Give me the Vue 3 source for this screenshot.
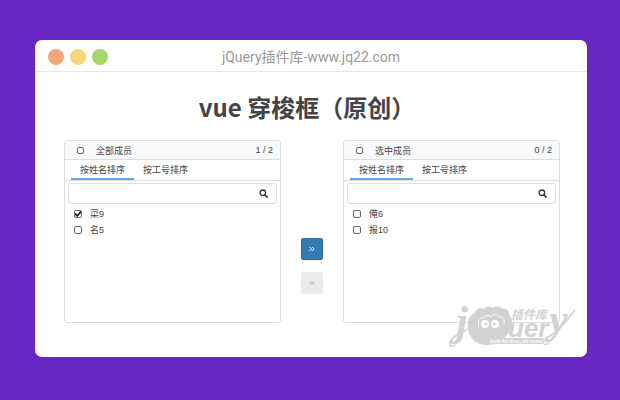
<script setup>
import { computed, reactive } from 'vue'

const panels = reactive([
  {
    id: 'all',
    title: '全部成员',
    sort: 'name',
    query: '',
    items: [
      { name: '菜9', checked: true },
      { name: '名5', checked: false },
    ],
  },
  {
    id: 'selected',
    title: '选中成员',
    sort: 'name',
    query: '',
    items: [
      { name: '俺6', checked: false },
      { name: '报10', checked: false },
    ],
  },
])

const tabs = [
  { key: 'name', label: '按姓名排序' },
  { key: 'number', label: '按工号排序' },
]

const counts = computed(() => panels.map((p) => p.items.filter((i) => i.checked).length))

function allChecked(panel) {
  return panel.items.length > 0 && panel.items.every((i) => i.checked)
}

function toggleAll(panel, event) {
  panel.items.forEach((i) => { i.checked = event.target.checked })
}

function visibleItems(panel) {
  return panel.items.filter((i) => i.name.includes(panel.query))
}

function move(from, to) {
  const moving = panels[from].items.filter((i) => i.checked)
  panels[from].items = panels[from].items.filter((i) => !i.checked)
  panels[to].items.push(...moving.map((i) => ({ ...i, checked: false })))
}
</script>

<template>
  <div class="page">
    <main class="window">
      <header class="titlebar">
        <div class="dots">
          <span class="dot dot-red" />
          <span class="dot dot-yellow" />
          <span class="dot dot-green" />
        </div>
        <span class="address">jQuery插件库-www.jq22.com</span>
      </header>

      <h1>vue 穿梭框（原创）</h1>

      <div class="transfer">
        <section v-for="(panel, index) in panels" :key="panel.id" class="panel" :class="'panel-' + panel.id">
          <div class="panel-head">
            <label class="check">
              <input type="checkbox" :checked="allChecked(panel)" @change="toggleAll(panel, $event)" />
              <span>{{ panel.title }}</span>
            </label>
            <span>{{ counts[index] }} / {{ panel.items.length }}</span>
          </div>
          <div class="tabs">
            <button
              v-for="tab in tabs"
              :key="tab.key"
              type="button"
              class="tab"
              :class="{ active: panel.sort === tab.key }"
              @click="panel.sort = tab.key"
            >{{ tab.label }}</button>
          </div>
          <div class="search">
            <input v-model="panel.query" type="text" aria-label="搜索" />
            <svg width="9" height="9" viewBox="0 0 9 9" fill="none" stroke="#333">
              <circle cx="3.8" cy="3.8" r="2.8" stroke-width="1.3" />
              <path d="M6 6L8.1 8.1" stroke-width="1.6" stroke-linecap="round" />
            </svg>
          </div>
          <ul class="list">
            <li v-for="item in visibleItems(panel)" :key="item.name">
              <label class="check">
                <input v-model="item.checked" type="checkbox" />
                <span>{{ item.name }}</span>
              </label>
            </li>
          </ul>
        </section>

        <div class="actions">
          <button type="button" class="move primary" aria-label="右移" @click="move(0, 1)">
            <svg width="6" height="6" viewBox="0 0 6 6" fill="none" stroke="currentColor">
              <path d="M.6 1L2.6 3L.6 5M3.2 1L5.2 3L3.2 5" />
            </svg>
          </button>
          <button type="button" class="move" aria-label="左移" :disabled="counts[1] === 0" @click="move(1, 0)">
            <svg width="6" height="6" viewBox="0 0 6 6" fill="none" stroke="currentColor">
              <path d="M2.8 1L.8 3L2.8 5M5.4 1L3.4 3L5.4 5" />
            </svg>
          </button>
        </div>
      </div>

      <svg class="watermark" width="130" height="44" viewBox="0 0 130 44" fill="#d2d2d2">
        <text x="8" y="29" class="mark-script">j</text>
        <text x="101" y="27" class="mark-script">y</text>
        <!-- flourishes at both ends of the name -->
        <g fill="none" stroke="#d2d2d2" stroke-width="1.5" stroke-linecap="round">
          <path d="M7 39C1 42 0 37 4 33C8 28 17 26 23 21" />
          <path d="M101 37C95 41 93 36 99 32C109 26 117 18 127 4" />
        </g>
        <!-- sheep's head: wool, face, eyes -->
        <path d="M20 20C19 14 22 9 27 7C27 3 33 1 36 3C38 0 43 0 45 2C48 -1 53 1 54 3C59 2 62 6 61 9C65 12 64 17 63 20C62 28 55 34 49 38L39 39C27 39 20 31 20 20Z" />
        <path d="M31 21C29 16 31 12 35 12C37 9 41 9 43 11C46 7 50 8 51 11C55 10 57 14 56 18" fill="none" stroke="#fff" />
        <circle cx="37" cy="18" r="4" fill="#fff" />
        <circle cx="47" cy="18" r="4" fill="#fff" />
        <circle cx="38" cy="18" r="1.5" />
        <circle cx="46" cy="18" r="1.5" />
        <path d="M41 32H96L94 38H39Z" />
        <text x="60" y="31" class="mark-name">uer</text>
        <text x="63" y="13" class="mark-zh">插件库</text>
        <text x="42" y="37" class="mark-line">look for less, do more</text>
      </svg>
    </main>
  </div>
</template>

<style>
body {
  background: #6826c2;
}
</style>

<style scoped>
.page {
  box-sizing: border-box;
  min-height: 100vh;
  padding: 40px 33px 43px 35px;
  background: #6826c2;
  color: #444;
  font-family: "Liberation Sans", "Noto Sans CJK SC", sans-serif;
  font-size: 9px;
}
.window {
  position: relative;
  padding-bottom: 34px;
  border-radius: 7px;
  background: #fff;
}
.titlebar {
  display: grid;
  grid-template-columns: 1fr auto 1fr;
  align-items: center;
  height: 31px;
  padding: 0 13px;
  border-bottom: 1px solid #e6e6e6;
}
.dots {
  display: flex;
  gap: 6px;
  padding-top: 2px;
}
.dot {
  width: 16px;
  height: 16px;
  border-radius: 50%;
}
.dot-red { background: #f5a67b; }
.dot-yellow { background: #f8d77c; }
.dot-green { background: #a4d86a; }
.address {
  color: #999;
  font-family: Roboto, "Noto Sans CJK SC", sans-serif;
  font-size: 14px;
}
h1 {
  margin: 17px 0 15px;
  padding-right: 8px;
  color: #444;
  font-family: "Noto Sans CJK SC", sans-serif;
  font-size: 24px;
  font-weight: 700;
  line-height: 36px;
  text-align: center;
}
.transfer {
  display: grid;
  grid-template-columns: 1fr 62px 1fr;
  padding: 0 27px 0 29px;
}
.panel {
  box-sizing: border-box;
  min-width: 0;
  min-height: 183px;
  border: 1px solid #ddd;
  border-radius: 3px;
}
.panel-all { grid-area: 1 / 1; }
.panel-selected { grid-area: 1 / 3; }
.panel-head {
  display: flex;
  align-items: center;
  justify-content: space-between;
  height: 18px;
  padding: 0 7px 0 12px;
  border-bottom: 1px solid #ddd;
  background: #f8f9fb;
}
.check {
  display: flex;
  align-items: center;
  gap: 8px;
}
.panel-head .check { gap: 12px; }
.check input {
  appearance: none;
  box-sizing: border-box;
  width: 8px;
  height: 8px;
  margin: 0;
  border: 1px solid #666;
  border-radius: 2px;
  background: #fff;
}
.panel-head .check input {
  width: 7px;
  height: 7px;
}
.check input:checked {
  background: url("data:image/svg+xml,%3Csvg xmlns='http://www.w3.org/2000/svg' viewBox='0 0 8 8'%3E%3Cpath d='M1 3.5L3.2 5.8L7.5 1' fill='none' stroke='%23222' stroke-width='1.8'/%3E%3C/svg%3E") border-box center / 8px 8px;
}
.tabs {
  display: flex;
  height: 20px;
  padding: 0 6px;
  border-bottom: 1px solid #ddd;
}
.tab {
  padding: 0 9px;
  border: 0;
  border-bottom: 2px solid transparent;
  background: none;
  color: inherit;
  font: inherit;
}
.tab.active { border-bottom-color: #62a8ea; }
.search {
  display: flex;
  align-items: center;
  height: 19px;
  margin: 2px 3px;
  padding-right: 8px;
  border: 1px solid #ddd;
  border-radius: 3px;
}
.search input {
  flex: 1;
  min-width: 0;
  height: 17px;
  padding: 0 5px;
  border: 0;
  outline: 0;
  background: none;
  font: inherit;
}
.list {
  margin: 0;
  padding: 0 9px;
  list-style: none;
  line-height: 16px;
}
.actions {
  grid-area: 1 / 2;
  display: flex;
  flex-direction: column;
  align-items: center;
  gap: 12px;
  padding-top: 98px;
}
.move {
  display: flex;
  align-items: center;
  justify-content: center;
  width: 22px;
  height: 22px;
  padding: 0;
  border: 0;
  border-radius: 2px;
  background: #ebebeb;
  color: #aaa;
}
.move.primary {
  border: 1px solid #2e6da4;
  background: #337ab7;
  color: #fff;
}
.watermark {
  position: absolute;
  right: 9px;
  bottom: 7px;
  overflow: visible;
  pointer-events: none;
}
.mark-script {
  font: italic 700 42px "Liberation Serif", serif;
}
.mark-name {
  font: italic 700 26px "Liberation Sans", sans-serif;
}
.mark-zh {
  font: italic 700 12px "Noto Sans CJK SC", sans-serif;
}
.mark-line {
  fill: #fff;
  font: 700 5px "Liberation Sans", sans-serif;
}
</style>
